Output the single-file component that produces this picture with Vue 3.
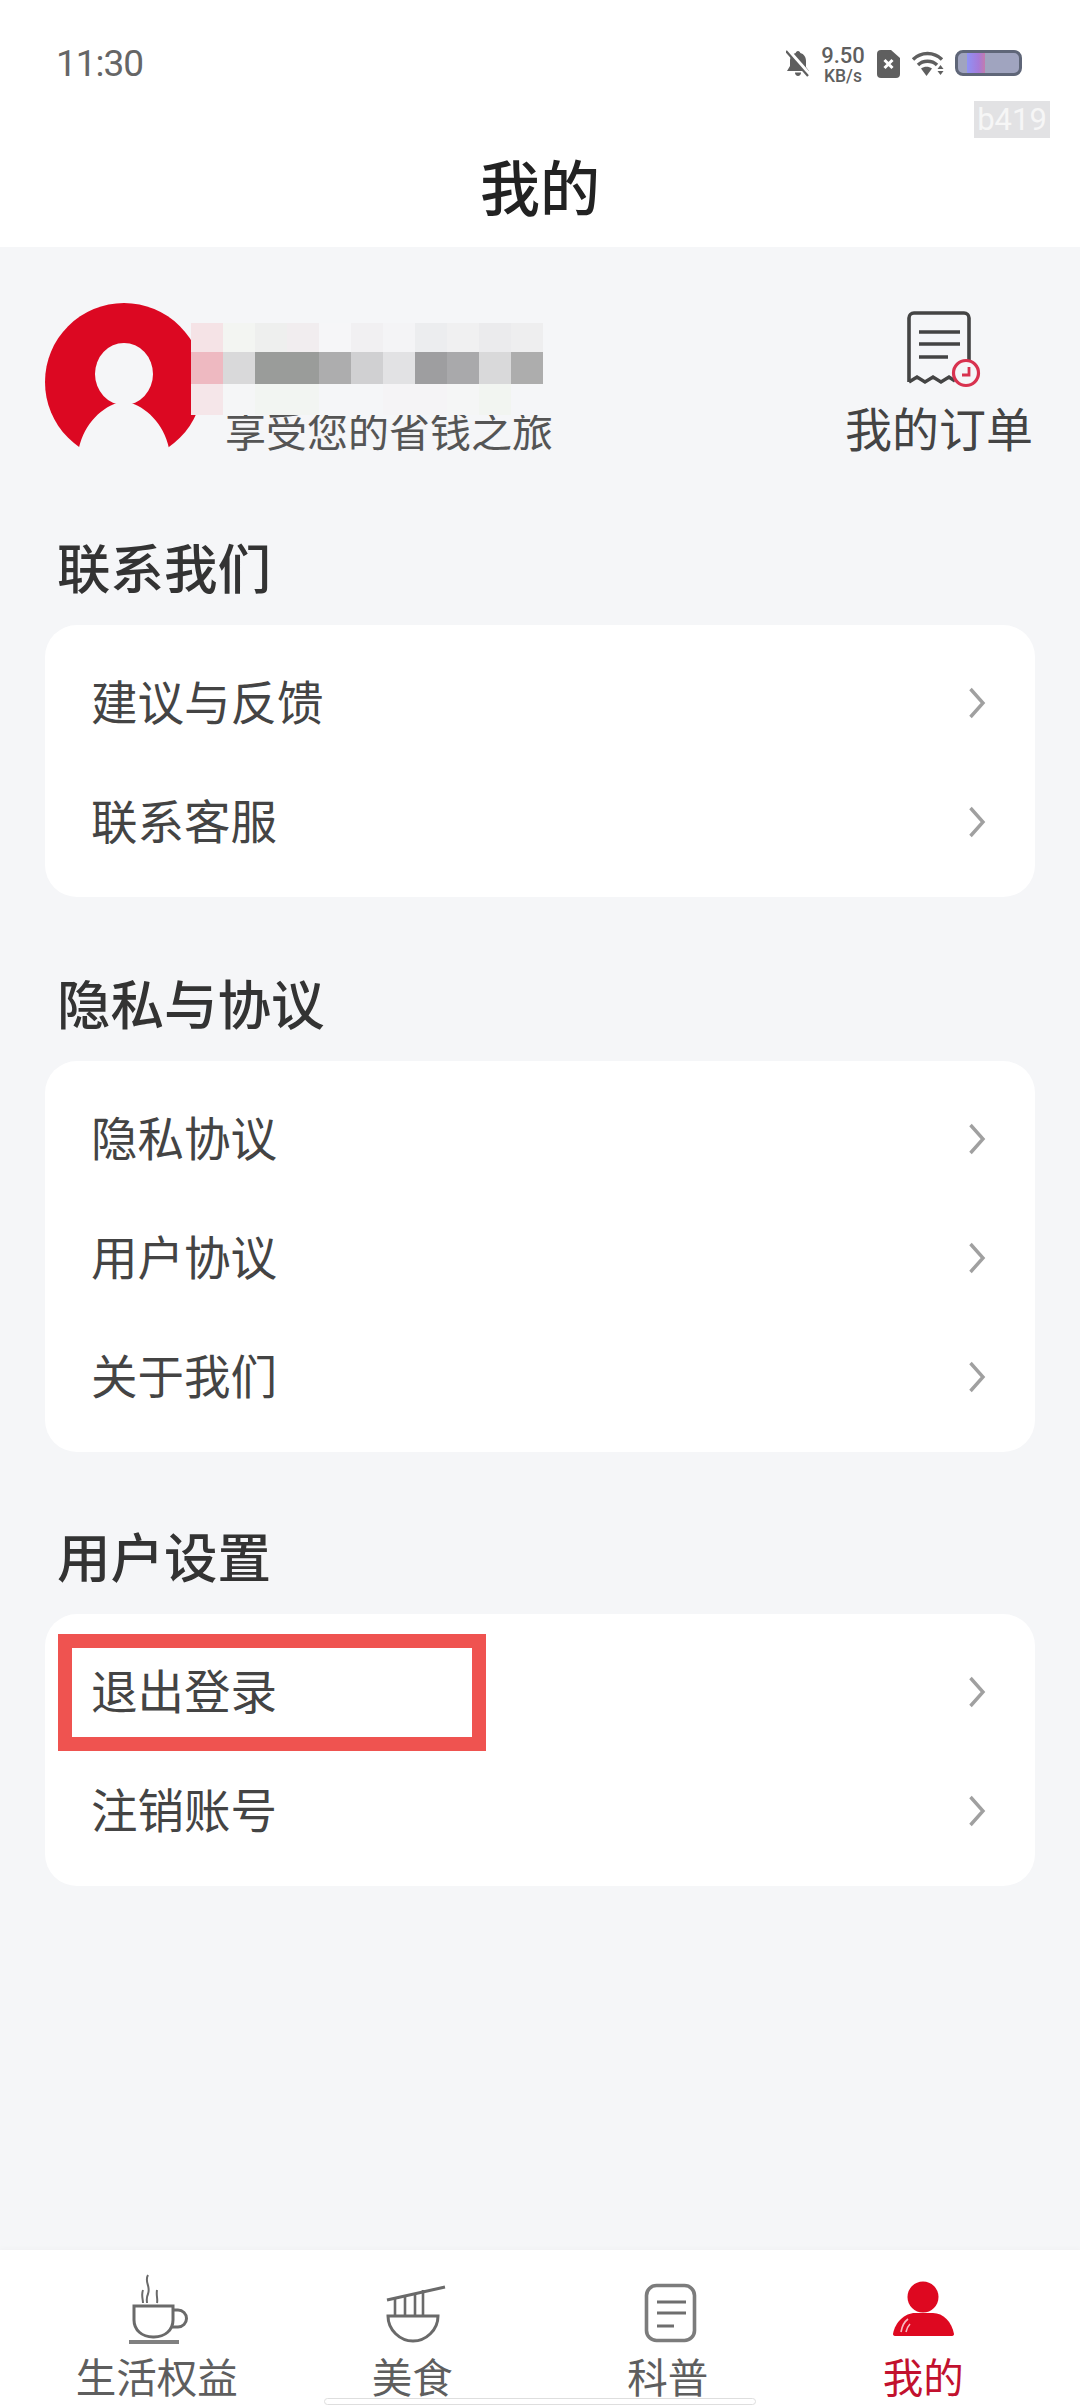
<script setup>
const mosaicTop = ['#f5e3e6','#f3f5f2','#eeefee','#f1edef','#f6f6f8','#f1f0f2','#f4f4f6','#ecedef','#f0f0f1','#ebebed','#eeeeef']
const mosaicMid = ['#eeb9c1','#d9d9da','#9a9c9a','#9a9c9a','#adadae','#d0d0d2','#e2e2e4','#9e9ea0','#a9a9ab','#d9d9da','#adadad']
const mosaicLow = ['#f5e6e9','#f5f6f7','#f2f5f2','#f2f5f2','#f5f6f8','#f5f6f8','#f5f4f6','#f5f4f6','#f5f6f6','#f2f5f1','#f5f6f8']
const mosaic = [...mosaicTop, ...mosaicMid, ...mosaicLow]

const sections = [
  { title: '联系我们', rows: [{ label: '建议与反馈' }, { label: '联系客服' }] },
  { title: '隐私与协议', rows: [{ label: '隐私协议' }, { label: '用户协议' }, { label: '关于我们' }] },
  { title: '用户设置', rows: [{ label: '退出登录', marked: true }, { label: '注销账号' }] }
]
</script>

<template>
  <div class="page">
    <header class="header">
      <div class="status">
        <span class="time">11:30</span>
        <div class="status-icons">
          <svg class="bell" viewBox="0 0 24 27" width="24" height="27">
            <path d="M12 1c1.500 0 2 1 2.300 2 3.700 1 5.700 4 5.700 8v6l3 4H1l3-5v-5c0-4 2-7 5.700-8C10 2 10.500 1 12 1z" fill="#5f5f5f" />
            <path d="M9 22.500h6c0 2-1.300 3.500-3 3.500s-3-1.500-3-3.500z" fill="#5f5f5f" />
            <path d="M2 0l22 25" stroke="#fff" stroke-width="3.600" />
            <path d="M0 1l22 25" stroke="#5f5f5f" stroke-width="2.200" />
          </svg>
          <div class="speed"><span>9.50</span><span class="unit">KB/s</span></div>
          <svg class="sim" viewBox="0 0 23 28" width="23" height="28">
            <path d="M4 0h10l9 8v16a4 4 0 0 1-4 4H4a4 4 0 0 1-4-4V4a4 4 0 0 1 4-4z" fill="#5f5f5f" />
            <path d="M7.500 10l8 8M15.500 10l-8 8" stroke="#fff" stroke-width="3" />
          </svg>
          <svg class="wifi" viewBox="0 0 33 27" width="33" height="27">
            <path d="M2 9.500C10 1.500 23 1.500 31 9.500" fill="none" stroke="#5f5f5f" stroke-width="3.400" />
            <path d="M7 15C12 10 21 10 26 15" fill="none" stroke="#5f5f5f" stroke-width="3.400" />
            <path d="M10 18.500c3.500-2.500 7.500-2.500 11 0l-5.500 7.500z" fill="#5f5f5f" />
            <path d="M29.500 15l3 4h-6zM26.500 21h6l-3 4z" fill="#5f5f5f" />
          </svg>
          <div class="battery"><span class="charge"></span></div>
        </div>
      </div>
      <div class="watermark">b419</div>
      <h1 class="title">我的</h1>
    </header>

    <main class="main">
      <section class="profile">
        <svg class="avatar" viewBox="0 0 158 158" width="158" height="158">
          <circle cx="79" cy="79" r="79" fill="#dc0822" />
          <ellipse cx="79" cy="71" rx="29" ry="31" fill="#f5f6f8" />
          <path d="M68 92L72 100C54 106 37 124 33 150V158H125V150C121 124 104 106 86 100L90 92Z" fill="#f5f6f8" />
        </svg>
        <div class="user">
          <div class="mosaic">
            <i v-for="(c, i) in mosaic" :key="i" :style="{ background: c }"></i>
          </div>
          <p class="slogan">享受您的省钱之旅</p>
        </div>
        <div class="orders">
          <svg class="receipt" viewBox="0 0 80 80" width="80" height="80">
            <path d="M5 72V8a5 5 0 0 1 5-5h50a5 5 0 0 1 5 5v44" fill="none" stroke="#444" stroke-width="3.600" />
            <path d="M5 72l8-5 8 5 8-5 8 5 8-5 6 4" fill="none" stroke="#444" stroke-width="3.400" />
            <path d="M15 22h41M15 34h41M15 47h29" stroke="#444" stroke-width="3.600" />
            <circle cx="62" cy="63" r="12.500" fill="#f5f6f8" stroke="#d8324f" stroke-width="3.200" />
            <path d="M65 57v8h-7" fill="none" stroke="#d8324f" stroke-width="2.800" />
          </svg>
          <span>我的订单</span>
        </div>
      </section>

      <section v-for="s in sections" :key="s.title" class="group">
        <h2 class="group-title">{{ s.title }}</h2>
        <div class="card">
          <div v-for="r in s.rows" :key="r.label" class="row">
            <span class="label">{{ r.label }}</span>
            <span v-if="r.marked" class="mark"></span>
            <svg class="chevron" viewBox="0 0 18 32" width="18" height="32">
              <path d="M2.500 2L15 16 2.500 30" fill="none" stroke="#a0a0a0" stroke-width="3.400" />
            </svg>
          </div>
        </div>
      </section>
    </main>

    <nav class="tabs">
      <div class="tab">
        <svg viewBox="0 0 72 72" width="72" height="72">
          <g fill="none" stroke="#6a6a6a" stroke-width="3">
            <path d="M13 34H52V48C52 58 44 65 33 65H32C21 65 13 58 13 48Z" />
            <path d="M52 38h5a8.500 8.500 0 0 1 0 17h-6" />
            <path d="M27 3C23 10 30 14 27 22C25 26 26 29 26 31M22 18C20 23 22 27 22 31M36 18C35 24 37 27 36 31" stroke-width="2" />
          </g>
          <path d="M8 70H58" stroke="#808080" stroke-width="4" />
        </svg>
        <span>生活权益</span>
      </div>
      <div class="tab">
        <svg viewBox="0 0 72 72" width="72" height="72">
          <g fill="none" stroke="#6a6a6a" stroke-width="3">
            <path d="M12 44H62C62 58 50 69 37 69C24 69 12 58 12 44Z" />
            <path d="M11 28L69 15" />
            <path d="M19 26V43M29 24V43M39 22V43M47 18V43" stroke-width="2.600" />
          </g>
        </svg>
        <span>美食</span>
      </div>
      <div class="tab">
        <svg viewBox="0 0 72 72" width="72" height="72">
          <rect x="14.500" y="13.500" width="48" height="55" rx="10" fill="none" stroke="#7c7c7c" stroke-width="3.600" />
          <path d="M25 30H54M25 41H54M25 54H42" stroke="#6e6e6e" stroke-width="3" />
        </svg>
        <span>科普</span>
      </div>
      <div class="tab active">
        <svg viewBox="0 0 72 72" width="72" height="72">
          <circle cx="36" cy="25" r="15.500" fill="#de0820" />
          <path d="M6 62C8 50 18 41 28 41H46C56 41 65 50 67 62Q67 64 64 64H9Q6 64 6 62Z" fill="#de0820" />
          <path d="M14 60C15 54 17 50 21 47M19 60C20 56 21 54 23 52" fill="none" stroke="#f7b9c1" stroke-width="1.600" />
        </svg>
        <span>我的</span>
      </div>
    </nav>
    <div class="home-bar"></div>
  </div>
</template>

<style>
html, body { margin: 0; padding: 0; background: #f5f6f8; }
</style>

<style scoped>
.page {
  position: relative;
  width: 1080px;
  height: 2408px;
  display: flex;
  flex-direction: column;
  overflow: hidden;
  background: #f5f6f8;
  font-family: "Noto Sans CJK SC", "Noto Sans", sans-serif;
  color: #444;
}
.header { position: relative; height: 247px; background: #fff; flex: none; }
.status {
  height: 131px;
  box-sizing: border-box;
  padding: 46px 58px 0 56px;
  display: flex;
  justify-content: space-between;
  align-items: flex-start;
}
.time {
  font: 400 37px/36px Roboto, sans-serif;
  color: #666;
  letter-spacing: -1px;
}
.status-icons { display: flex; align-items: flex-start; margin-top: 4px; }
.bell { margin-right: 11px; }
.speed {
  width: 44px;
  margin-top: -4px;
  display: flex;
  flex-direction: column;
  align-items: center;
  font: 500 22px/20px Roboto, sans-serif;
  color: #5f5f5f;
  margin-right: 12px;
}
.speed .unit { font-size: 17.500px; line-height: 18px; margin-top: 1px; }
.sim { margin-right: 11px; }
.wifi { margin-right: 11px; }
.battery {
  width: 67px;
  height: 26px;
  box-sizing: border-box;
  border: 3px solid #5f6678;
  border-radius: 8px;
  background: #a0a4bf;
  padding-left: 9px;
}
.charge {
  display: block;
  width: 18px;
  height: 100%;
  background: linear-gradient(90deg, #8f92f5, #a67ad8 65%, #c27cae);
}
.watermark {
  position: absolute;
  left: 974px;
  top: 101px;
  width: 76px;
  height: 37px;
  background: #e2e2e4;
  color: #f6f6f6;
  font: 400 31px/37px Roboto, sans-serif;
  text-align: center;
}
.title {
  margin: 0;
  height: 116px;
  font-size: 60px;
  line-height: 108px;
  font-weight: 500;
  text-align: center;
  color: #222;
}
.main { flex: 1; padding: 0 45px; }
.profile {
  display: flex;
  align-items: flex-start;
  height: 286px;
  box-sizing: border-box;
  padding-top: 56px;
}
.avatar { flex: none; }
.user { position: relative; margin-left: 22px; padding-top: 98px; flex: 1; }
.mosaic {
  position: absolute;
  left: -34px;
  top: 20px;
  display: grid;
  grid-template-columns: repeat(11, 32px);
  grid-template-rows: 29px 32px 31px;
}
.slogan {
  margin: 0;
  font-size: 41px;
  line-height: 56px;
  color: #555;
  white-space: nowrap;
}
.orders {
  width: 188px;
  margin: 7px 2px 0 0;
  display: flex;
  flex-direction: column;
  align-items: center;
  font-size: 47px;
  line-height: 60px;
  color: #444;
}
.receipt { margin-bottom: 7px; margin-left: 9px; }
.group + .group { margin-top: 72px; }
.group:last-child { margin-top: 70px; }
.group-title {
  margin: 0 0 20px 12px;
  height: 72px;
  font-size: 53.500px;
  line-height: 66px;
  font-weight: 500;
  color: #333;
}
.card {
  background: #fff;
  border-radius: 32px;
  padding: 18px 0 16px;
}
.row {
  position: relative;
  height: 119px;
  display: flex;
  align-items: center;
  justify-content: space-between;
  padding: 0 49px 0 46px;
}
.label { font-size: 46.500px; line-height: 60px; margin-bottom: 6px; color: #444; }
.chevron { flex: none; }
.mark {
  position: absolute;
  left: 13px;
  top: 2px;
  width: 428px;
  height: 117px;
  box-sizing: border-box;
  border: 14px solid #ef5350;
}
.tabs {
  flex: none;
  height: 158px;
  box-sizing: border-box;
  padding: 22px 29px 0;
  background: #fff;
  box-shadow: 0 -2px 5px rgba(0, 0, 0, 0.02);
  display: flex;
}
.tab {
  flex: 1;
  display: flex;
  flex-direction: column;
  align-items: center;
  font-size: 40.500px;
  line-height: 56px;
  color: #5e5e5e;
}
.tab span { margin-top: 4px; white-space: nowrap; }
.tab.active span { color: #c2112e; }
.home-bar {
  position: absolute;
  left: 324px;
  top: 2398px;
  width: 432px;
  height: 7px;
  box-sizing: border-box;
  background: #fff;
  border: 1px solid #dedede;
  border-radius: 4px;
}
</style>
